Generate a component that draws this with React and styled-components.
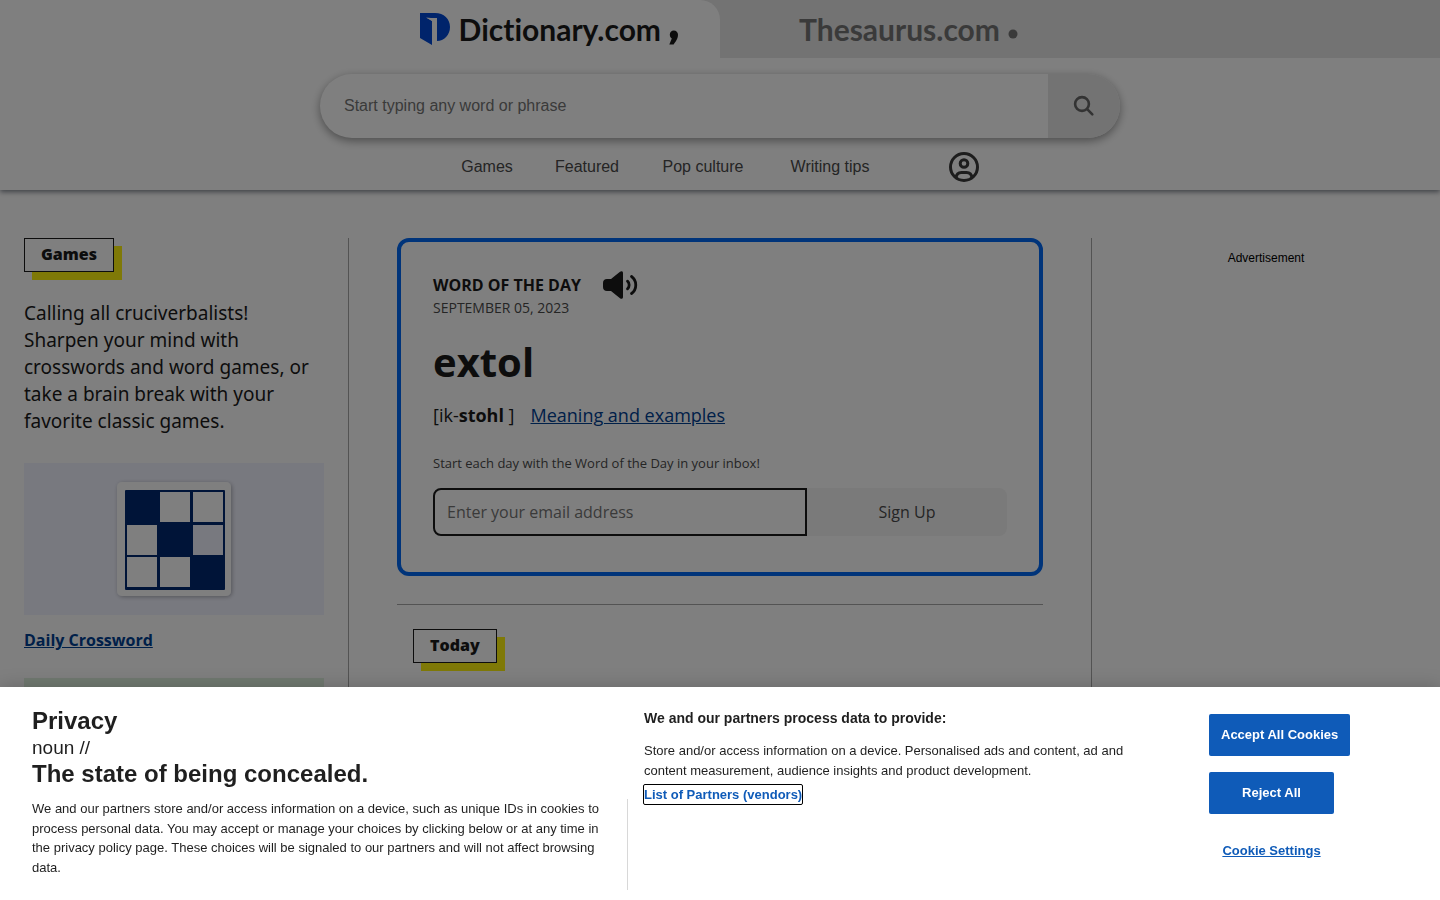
import React, { useState } from 'react';
import styled, { createGlobalStyle } from 'styled-components';

const SANS = "'Liberation Sans', Arial, Helvetica, sans-serif";
const BODY = "'Open Sans', 'Noto Sans', sans-serif";
const LOGO = "Lato, 'Open Sans', sans-serif";

const NAV_LINKS = ['Games', 'Featured', 'Pop culture', 'Writing tips'];

// x, y and fill of the light squares on the crossword board
const SQUARES = [
  [44, 11, '#fff'],
  [77, 11, '#fff'],
  [11, 44, '#fff'],
  [77, 44, '#f1f3ff'],
  [11, 76, '#fff'],
  [44, 76, '#fff'],
];

const GlobalStyle = createGlobalStyle`
  * {
    box-sizing: border-box;
  }

  body {
    margin: 0;
    height: 100vh;
    overflow: hidden;
    background: #ffffff;
    color: #1a1a1a;
    font-family: ${BODY};
  }

  p, h1, h2, h3 {
    margin: 0;
  }
`;

// ---------------------------------------------------------------------------
// Header
// ---------------------------------------------------------------------------
const Header = styled.header`
  background: #ffffff;
  box-shadow: 0 2px 5px rgba(0, 12, 30, 0.5);
`;

const SiteTabs = styled.div`
  display: grid;
  grid-template-columns: 1fr 1fr;
  height: 58px;
  background: #e6e6e6;
`;

const SiteTab = styled.a`
  display: flex;
  align-items: center;
  justify-content: ${(p) => (p.$active ? 'flex-end' : 'flex-start')};
  padding: ${(p) => (p.$active ? '0 42px 0 0' : '0 0 0 79px')};
  background: ${(p) => (p.$active ? '#ffffff' : 'transparent')};
  border-top-right-radius: ${(p) => (p.$active ? '20px' : '0')};
  color: ${(p) => (p.$active ? '#1a1a1a' : '#757575')};
  font-family: ${LOGO};
  font-size: 30px;
  font-variant-ligatures: none;
  font-weight: 700;
  line-height: 36px;
  text-decoration: none;

  svg {
    flex-shrink: 0;
  }
`;

const LogoMark = styled.svg`
  margin-right: 8px;
`;

const LogoPunctuation = styled.svg`
  margin-left: 8px;
`;

const SearchForm = styled.form`
  display: flex;
  width: 800px;
  max-width: 100%;
  height: 64px;
  margin: 16px auto 0;
  overflow: hidden;
  border-radius: 32px;
  background: #ffffff;
  box-shadow: 0 3px 10px rgba(0, 0, 0, 0.4);
`;

const SearchInput = styled.input`
  flex: 1;
  min-width: 0;
  padding: 0 24px;
  border: none;
  outline: none;
  background: transparent;
  font-family: ${SANS};
  font-size: 16px;

  &::placeholder {
    color: #757575;
    opacity: 1;
  }
`;

const SearchButton = styled.button`
  display: flex;
  align-items: center;
  justify-content: center;
  width: 72px;
  padding: 0;
  border: none;
  background: #e6e6e6;
  cursor: pointer;
`;

const Nav = styled.nav`
  display: grid;
  grid-template-columns: 100px 100px 132px 122px 112px;
  align-items: center;
  justify-content: center;
  height: 52px;
  padding-top: 6px;
`;

const NavLink = styled.a`
  color: #4a4a4a;
  font-family: ${SANS};
  font-size: 16px;
  text-align: center;
  text-decoration: none;
`;

const AccountButton = styled.button`
  display: flex;
  justify-self: end;
  margin-right: 24px;
  padding: 0;
  border: none;
  background: none;
  cursor: pointer;
`;

// ---------------------------------------------------------------------------
// Page columns
// ---------------------------------------------------------------------------
const Columns = styled.main`
  display: grid;
  grid-template-columns: 349px minmax(0, 1fr) 349px;
  padding-top: 48px;
`;

const GamesColumn = styled.aside`
  padding: 0 24px 48px;
  border-right: 1px solid #a6a6a6;
`;

const AdColumn = styled.aside`
  padding-top: 12px;
  border-left: 1px solid #a6a6a6;
  color: #000000;
  font-family: ${SANS};
  font-size: 12px;
  line-height: 16px;
  text-align: center;
`;

const CenterColumn = styled.section`
  padding: 0 48px;
`;

const Badge = styled.h2`
  width: fit-content;
  padding: 0 16px 2px;
  border: 1px solid #1a1a1a;
  background: #ffffff;
  box-shadow: 8px 8px 0 #fff20f;
  font-size: 16px;
  font-weight: 800;
  line-height: 30px;
`;

const GamesIntro = styled.p`
  margin-top: 28px;
  font-family: 'Noto Sans', sans-serif;
  font-size: 19px;
  line-height: 27px;
`;

const GameCard = styled.a`
  display: block;
  margin-top: ${(p) => p.$top}px;
  color: #004092;
  font-size: 16px;
  font-weight: 700;
  line-height: 24px;
`;

const GameArt = styled.div`
  display: flex;
  align-items: center;
  justify-content: center;
  height: 152px;
  margin-bottom: 13px;
  background: ${(p) => p.$color};
`;

const WordCard = styled.article`
  padding: 28px 32px 36px;
  border: 4px solid #0068f4;
  border-radius: 12px;
`;

const WordHeading = styled.div`
  display: flex;
  align-items: center;
  gap: 22px;
  height: 30px;
`;

const WordLabel = styled.h2`
  font-size: 16px;
  font-weight: 700;
`;

const AudioButton = styled.button`
  display: flex;
  padding: 0;
  border: none;
  background: none;
  cursor: pointer;
`;

const WordDate = styled.p`
  color: #4a4a4a;
  font-size: 14px;
  line-height: 16px;
`;

const Word = styled.h1`
  margin-top: 18px;
  font-size: 40px;
  font-weight: 700;
  line-height: 56px;
`;

const Pronunciation = styled.p`
  display: flex;
  gap: 16px;
  margin-top: 12px;
  font-size: 18px;
  line-height: 26px;

  a {
    color: #004092;
  }
`;

const SignUpLabel = styled.label`
  display: block;
  margin-top: 25px;
  color: #4a4a4a;
  font-size: 13px;
  line-height: 20px;
`;

const SignUpForm = styled.form`
  display: flex;
  height: 48px;
  margin-top: 15px;
`;

const EmailInput = styled.input`
  width: 374px;
  min-width: 0;
  padding: 0 12px;
  border: 2px solid #1a1a1a;
  border-radius: 8px 0 0 8px;
  outline: none;
  background: #ffffff;
  font-family: ${BODY};
  font-size: 16px;

  &::placeholder {
    color: #757575;
    opacity: 1;
  }
`;

const SignUpButton = styled.button`
  flex: 1;
  border: none;
  border-radius: 0 8px 8px 0;
  background: #f5f5f5;
  color: #4a4a4a;
  font-family: ${BODY};
  font-size: 16px;
  cursor: pointer;
`;

const TodaySection = styled.section`
  margin-top: 28px;
  padding: 24px 16px;
  border-top: 1px solid #a6a6a6;
`;

// ---------------------------------------------------------------------------
// Cookie consent
// ---------------------------------------------------------------------------
const Backdrop = styled.div`
  position: fixed;
  inset: 0;
  background: rgba(0, 0, 0, 0.5);
`;

const Banner = styled.section`
  position: fixed;
  right: 0;
  bottom: 0;
  left: 0;
  display: grid;
  grid-template-columns: 628px minmax(0, 1fr) 231px;
  min-height: 213px;
  background: #ffffff;
  box-shadow: 0 0 18px rgba(0, 0, 0, 0.2);
  color: #1f1f1f;
  font-family: ${SANS};
  font-size: 13px;
  line-height: 1.5;
`;

const PrivacyColumn = styled.div`
  display: flex;
  padding: 20px 0 10px 32px;
`;

const PrivacyCopy = styled.div`
  flex: 1;
  padding-right: 22px;
`;

const PrivacyTitle = styled.h2`
  font-size: 24px;
  font-weight: 700;
  line-height: 28px;
`;

const PrivacySubtitle = styled.p`
  font-size: 19px;
  line-height: 25px;
`;

const PrivacyText = styled.p`
  margin-top: 11px;
`;

const Divider = styled.div`
  width: 1px;
  height: 91px;
  align-self: flex-end;
  background: #d8d8d8;
`;

const PartnersColumn = styled.div`
  padding: 20px 68px 0 16px;
`;

const PartnersTitle = styled.h3`
  margin-bottom: 12px;
  font-size: 14px;
  font-weight: 700;
  line-height: 22px;
`;

const VendorsButton = styled.button`
  margin-top: 5px;
  padding: 0;
  border: none;
  border-radius: 1px;
  outline: 1px solid #000000;
  background: none;
  color: #0f5bb8;
  font-family: inherit;
  font-size: 13px;
  font-weight: 700;
  line-height: 19px;
  cursor: pointer;
`;

const BannerActions = styled.div`
  display: flex;
  flex-direction: column;
  align-items: flex-start;
  gap: 16px;
  padding-top: 27px;
`;

const BannerButton = styled.button`
  min-width: 125px;
  height: 42px;
  padding: 0 12px 2px;
  border: none;
  border-radius: 2px;
  background: ${(p) => (p.$link ? 'none' : '#0f5bb8')};
  color: ${(p) => (p.$link ? '#0f5bb8' : '#ffffff')};
  font-family: inherit;
  font-size: 13px;
  font-weight: 700;
  text-decoration: ${(p) => (p.$link ? 'underline' : 'none')};
  cursor: pointer;
`;

// ---------------------------------------------------------------------------
// Drawings
// ---------------------------------------------------------------------------
function DictionaryMark() {
  return (
    <LogoMark width="31" height="32" viewBox="0 0 31 32" aria-hidden="true">
      <path d="M0 0H15C24 0 30 6 30 14C30 22 24 28 17 28V5L7 5L12 8V32L0 25Z" fill="#0049d7" />
      <path d="M6 4.500L16 5.500V28H12.300V8Z" fill="#ffffff" />
    </LogoMark>
  );
}

function SearchIcon() {
  return (
    <svg width="22" height="22" viewBox="0 0 22 22" fill="none" stroke="#666666" strokeWidth="2.6" strokeLinecap="round" aria-hidden="true">
      <circle cx="9" cy="9" r="6.9" />
      <path d="M14.2 14.2L19.3 19.3" />
    </svg>
  );
}

function AccountIcon() {
  return (
    <svg width="30" height="30" viewBox="0 0 30 30" fill="none" stroke="#3a3a3a" strokeWidth="3" aria-hidden="true">
      <circle cx="15" cy="15" r="13.5" />
      <circle cx="15" cy="11.5" r="3.8" />
      <path d="M7 26C7.400 21.800 9.500 20.500 12.500 20.500H17.500C20.500 20.500 22.600 21.800 23 26" />
    </svg>
  );
}

function SpeakerIcon() {
  return (
    <svg width="35" height="28" viewBox="0 0 35 28" aria-hidden="true">
      <path d="M4 8H8L17 .8C18.5-.4 20 .2 20 2V26C20 27.8 18.5 28.4 17 27.2L8 20H4C1.5 20 0 18.5 0 16V12C0 9.500 1.500 8 4 8Z" fill="#1a1a1a" />
      <path d="M24.500 10.200C26.700 12 26.700 16 24.500 17.800M28.500 5.500C34.200 9.500 34.200 18.500 28.500 22.500" fill="none" stroke="#1a1a1a" strokeWidth="2.800" strokeLinecap="round" />
    </svg>
  );
}

function CrosswordBoard() {
  return (
    <svg width="132" height="132" viewBox="-8 -8 132 132" aria-hidden="true">
      <defs>
        <filter id="board-shadow" x="-10%" y="-10%" width="120%" height="120%">
          <feDropShadow dx="1" dy="1" stdDeviation="2" floodOpacity="0.3" />
        </filter>
      </defs>
      <rect x="1" y="1" width="114" height="114" rx="5" fill="#ffffff" filter="url(#board-shadow)" />
      <rect x="9" y="9" width="100" height="100" rx="1" fill="#002970" />
      {SQUARES.map(([x, y, fill]) => (
        <rect key={`${x}-${y}`} x={x} y={y} width="30" height="30" fill={fill} />
      ))}
    </svg>
  );
}

// ---------------------------------------------------------------------------
// Sections
// ---------------------------------------------------------------------------
function SiteHeader() {
  return (
    <Header>
      <SiteTabs>
        <SiteTab href="#dictionary" $active>
          <DictionaryMark />
          Dictionary.com
          <LogoPunctuation width="9" height="32" viewBox="0 0 9 32" aria-hidden="true">
            <path d="M.8 21.500C.8 19.200 2.400 17.500 4.800 17.500S9 19.200 9 21.700C9 26 6.300 29 4.600 31.500H.3L2.800 25.500C1.500 24.800.8 23.300.8 21.500Z" fill="#1a1a1a" />
          </LogoPunctuation>
        </SiteTab>
        <SiteTab href="#thesaurus">
          Thesaurus.com
          <LogoPunctuation width="10" height="20" viewBox="0 0 10 20" aria-hidden="true">
            <circle cx="5" cy="15" r="4.500" fill="#757575" />
          </LogoPunctuation>
        </SiteTab>
      </SiteTabs>
      <SearchForm onSubmit={(e) => e.preventDefault()}>
        <SearchInput type="text" aria-label="Search" placeholder="Start typing any word or phrase" />
        <SearchButton type="submit" aria-label="Search">
          <SearchIcon />
        </SearchButton>
      </SearchForm>
      <Nav>
        {NAV_LINKS.map((label) => (
          <NavLink key={label} href="#">{label}</NavLink>
        ))}
        <AccountButton type="button" aria-label="Account">
          <AccountIcon />
        </AccountButton>
      </Nav>
    </Header>
  );
}

function WordOfTheDay() {
  return (
    <WordCard>
      <WordHeading>
        <WordLabel>WORD OF THE DAY</WordLabel>
        <AudioButton type="button" aria-label="Play pronunciation">
          <SpeakerIcon />
        </AudioButton>
      </WordHeading>
      <WordDate>SEPTEMBER 05, 2023</WordDate>
      <Word>extol</Word>
      <Pronunciation>
        <span>[ik-<b>stohl</b> ]</span>
        <a href="#extol">Meaning and examples</a>
      </Pronunciation>
      <SignUpLabel htmlFor="wotd-email">Start each day with the Word of the Day in your inbox!</SignUpLabel>
      <SignUpForm onSubmit={(e) => e.preventDefault()}>
        <EmailInput id="wotd-email" type="email" placeholder="Enter your email address" />
        <SignUpButton type="submit">Sign Up</SignUpButton>
      </SignUpForm>
    </WordCard>
  );
}

function CookieBanner({ onClose }) {
  return (
    <>
      <Backdrop />
      <Banner role="dialog" aria-label="Privacy">
        <PrivacyColumn>
          <PrivacyCopy>
            <PrivacyTitle>Privacy</PrivacyTitle>
            <PrivacySubtitle>noun //</PrivacySubtitle>
            <PrivacyTitle>The state of being concealed.</PrivacyTitle>
            <PrivacyText>
              We and our partners store and/or access information on a device, such as unique IDs in cookies to
              process personal data. You may accept or manage your choices by clicking below or at any time in the
              privacy policy page. These choices will be signaled to our partners and will not affect browsing data.
            </PrivacyText>
          </PrivacyCopy>
          <Divider />
        </PrivacyColumn>
        <PartnersColumn>
          <PartnersTitle>We and our partners process data to provide:</PartnersTitle>
          <p>
            Store and/or access information on a device. Personalised ads and content, ad and content measurement,
            audience insights and product development.
          </p>
          <VendorsButton type="button">List of Partners (vendors)</VendorsButton>
        </PartnersColumn>
        <BannerActions>
          <BannerButton type="button" onClick={onClose}>Accept All Cookies</BannerButton>
          <BannerButton type="button" onClick={onClose}>Reject All</BannerButton>
          <BannerButton type="button" $link>Cookie Settings</BannerButton>
        </BannerActions>
      </Banner>
    </>
  );
}

export default function App() {
  const [showBanner, setShowBanner] = useState(true);

  return (
    <>
      <GlobalStyle />
      <SiteHeader />
      <Columns>
        <GamesColumn>
          <Badge>Games</Badge>
          <GamesIntro>
            Calling all cruciverbalists! Sharpen your mind with crosswords and word games, or take a brain break
            with your favorite classic games.
          </GamesIntro>
          <GameCard href="#crossword" $top={28}>
            <GameArt $color="#f1f3ff">
              <CrosswordBoard />
            </GameArt>
            Daily Crossword
          </GameCard>
          <GameCard href="#games" aria-label="More games" $top={26}>
            <GameArt $color="#e0f2e0" />
          </GameCard>
        </GamesColumn>
        <CenterColumn>
          <WordOfTheDay />
          <TodaySection>
            <Badge>Today</Badge>
          </TodaySection>
        </CenterColumn>
        <AdColumn>Advertisement</AdColumn>
      </Columns>
      {showBanner && <CookieBanner onClose={() => setShowBanner(false)} />}
    </>
  );
}
